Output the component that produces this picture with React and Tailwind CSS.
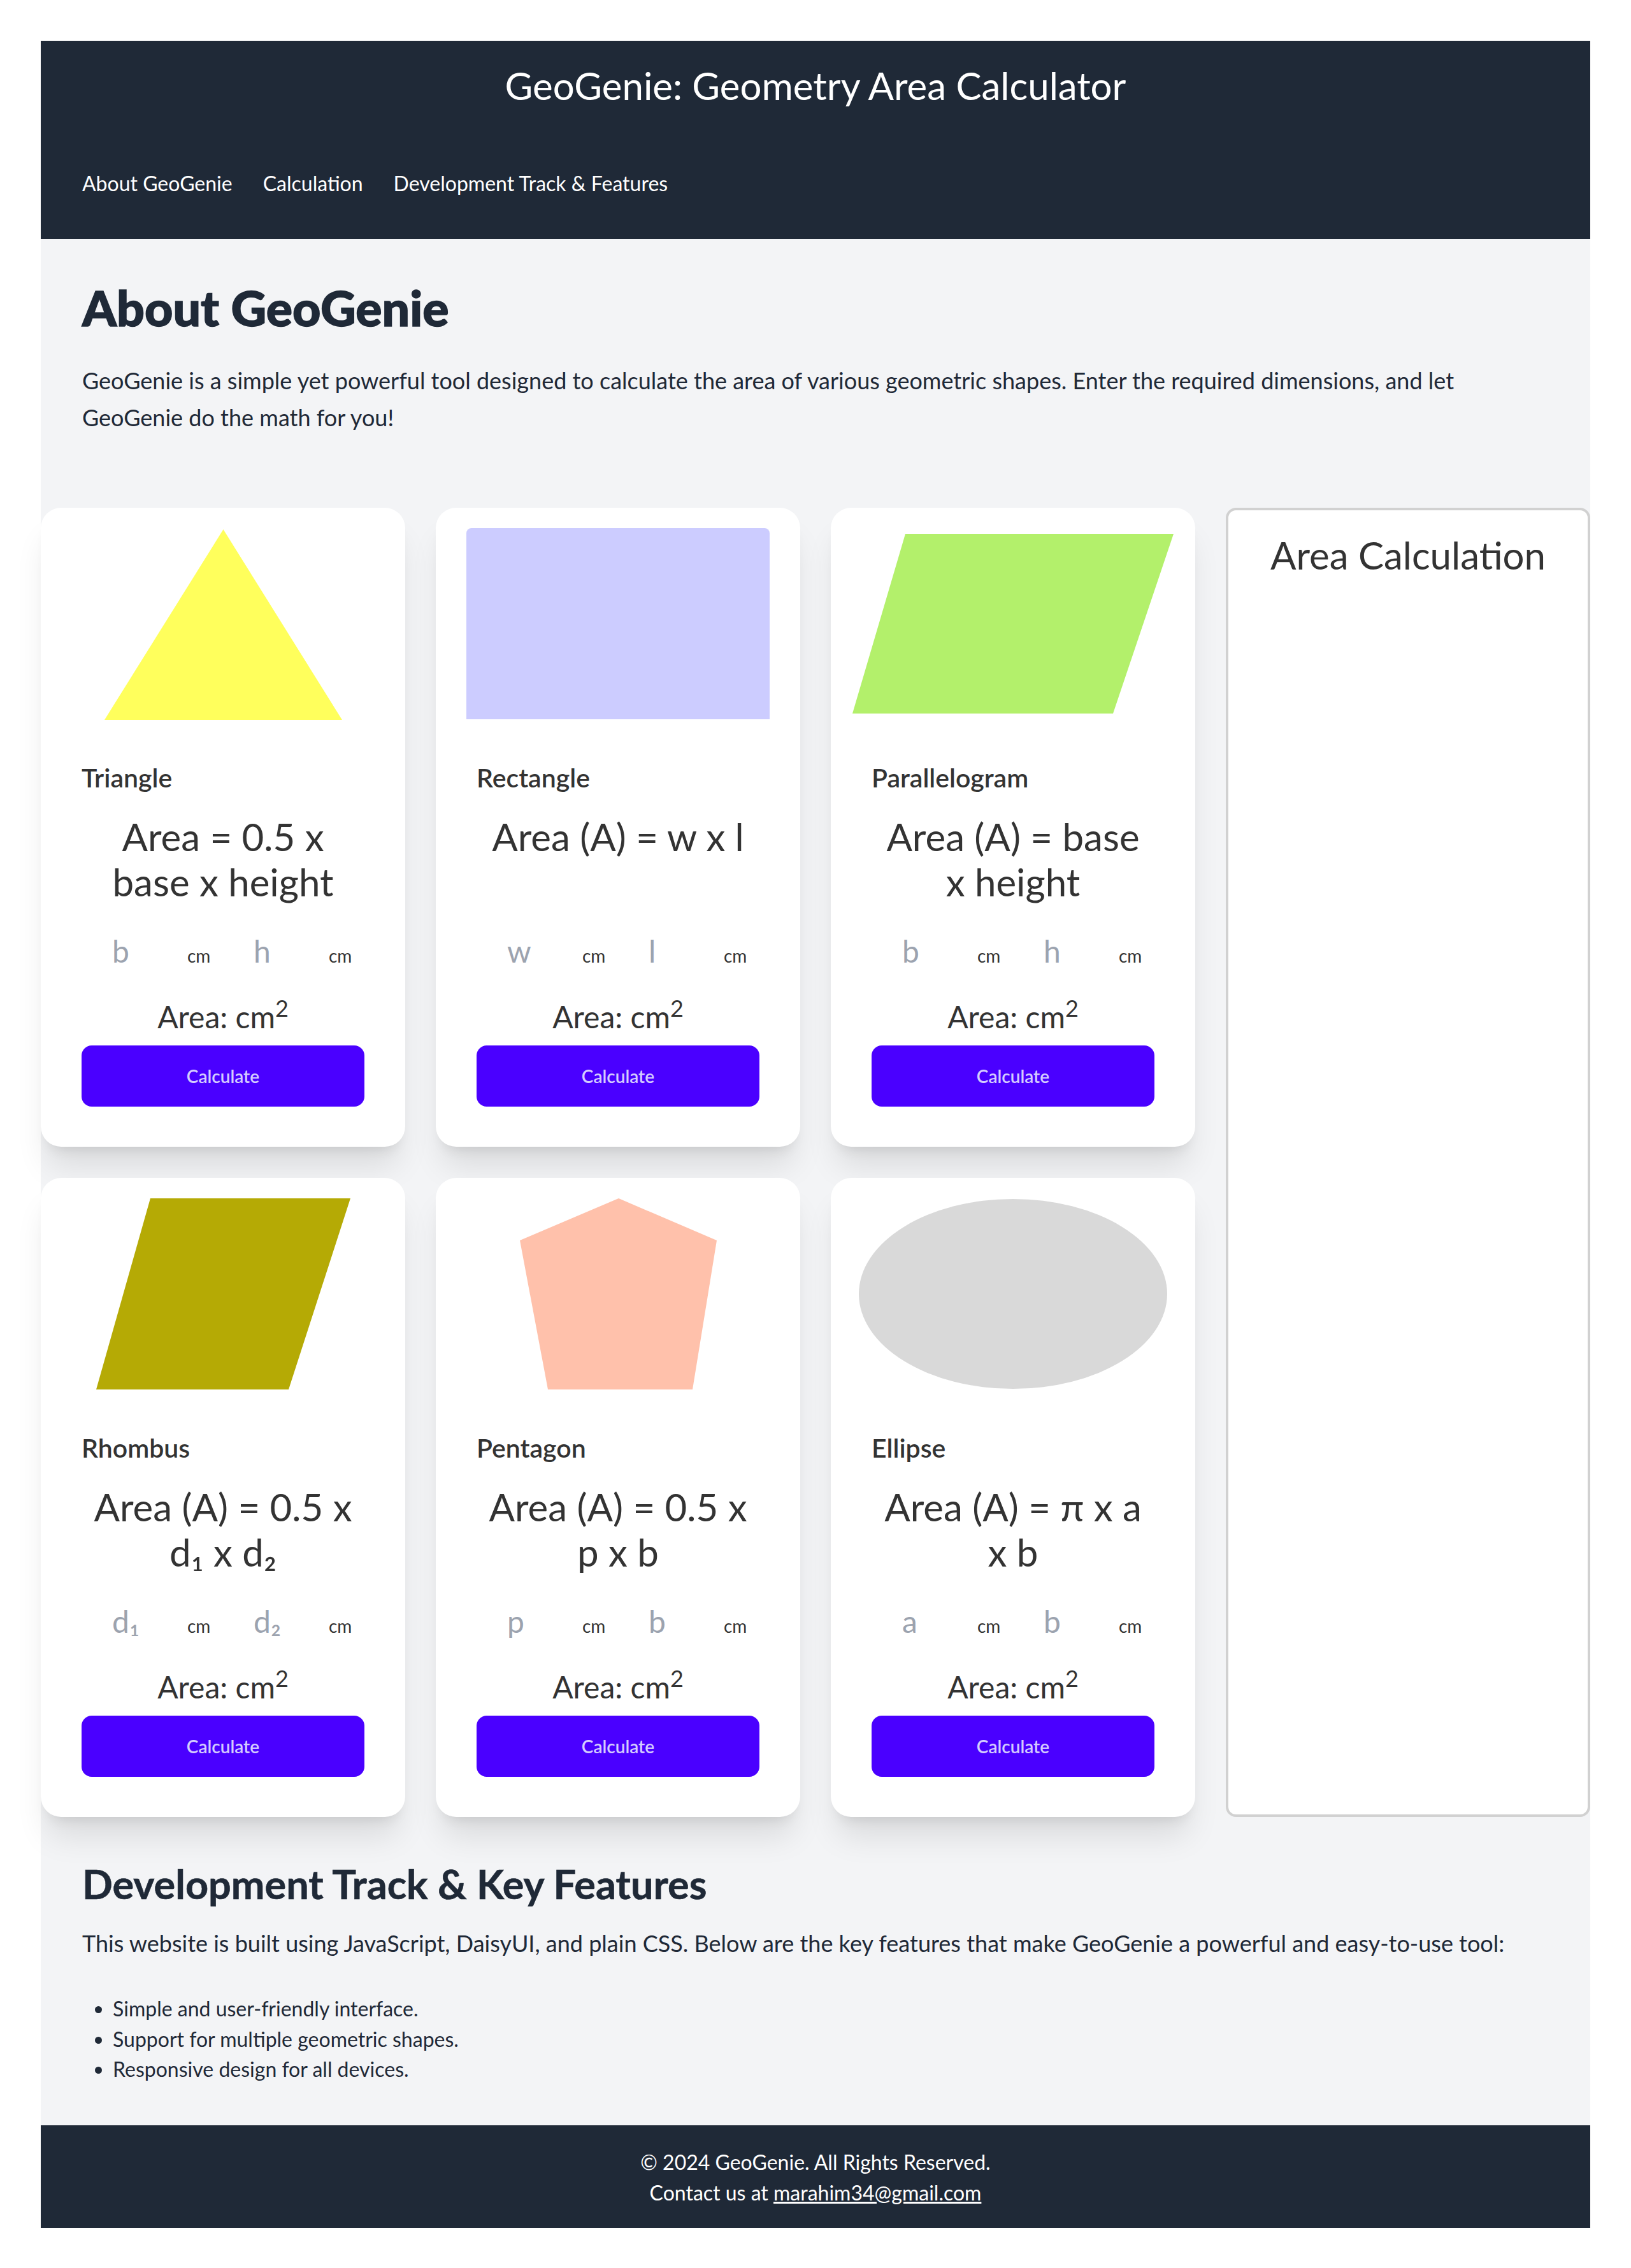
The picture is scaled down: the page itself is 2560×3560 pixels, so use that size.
import React from "react";

function Shape({ kind }) {
  if (kind === "triangle") {
    return (
      <svg width="373" height="299" viewBox="0 0 373 299" className="mt-[2px] shrink-0">
        <polygon points="186.5,0 373,299 0,299" fill="#ffff5c" />
      </svg>
    );
  }
  if (kind === "rectangle") {
    return <div className="w-[476px] h-[300px] shrink-0 bg-[#ccccff] rounded-t-[8px]" />;
  }
  if (kind === "parallelogram") {
    return (
      <svg width="504" height="282" viewBox="0 0 504 282" className="mt-[9px] shrink-0">
        <polygon points="83,0 504,0 409,282 0,282" fill="#b3f06b" />
      </svg>
    );
  }
  if (kind === "rhombus") {
    return (
      <svg width="399" height="300" viewBox="0 0 399 300" className="ml-[1px] shrink-0">
        <polygon points="85,0 399,0 302,300 0,300" fill="#b5aa05" />
      </svg>
    );
  }
  if (kind === "pentagon") {
    return (
      <svg width="309" height="300" viewBox="0 0 309 300" className="shrink-0">
        <polygon points="155,0 309,66 271,300 44,300 0,66" fill="#ffc1ab" />
      </svg>
    );
  }
  return <div className="w-[484px] h-[298px] shrink-0 rounded-[50%] bg-[#d9d9d9] mt-[1px]" />;
}

function Field({ placeholder }) {
  return (
    <div className="flex items-baseline">
      <input
        type="text"
        placeholder={placeholder}
        className="w-[160px] h-[96px] pl-[48px] text-[48px] bg-transparent outline-none text-[#333] placeholder:text-[#9ca3af]"
      />
      <span className="ml-[6px] text-[28px] text-[#333]">cm</span>
    </div>
  );
}

function Card({ name, kind, formula, fields }) {
  return (
    <div className="bg-white rounded-[32px] shadow-[0_40px_50px_-10px_rgba(0,0,0,0.1),0_16px_20px_-12px_rgba(0,0,0,0.1)] flex flex-col">
      <div className="h-[332px] pt-[32px] px-[40px] flex justify-center items-start">
        <Shape kind={kind} />
      </div>
      <div className="px-[64px] pt-[64px] pb-[63px] flex flex-col text-[#333]">
        <h2 className="text-[41px] leading-[56px] font-semibold">{name}</h2>
        <p className="mt-[29px] h-[142px] text-[60px] leading-[71px] text-center">{formula}</p>
        <div className="mt-[24px] grid grid-cols-2 h-[96px]">
          <Field placeholder={fields[0]} />
          <Field placeholder={fields[1]} />
        </div>
        <p className="mt-[24px] text-[48px] leading-[64px] text-center">
          Area: cm<sup>2</sup>
        </p>
        <button className="mt-[13px] h-[96px] w-full rounded-[16px] bg-[#4a00ff] text-[#d4ccff] text-[28px] font-semibold">
          Calculate
        </button>
      </div>
    </div>
  );
}

export default function App() {
  return (
    <div className="bg-white p-[64px] font-['Lato','Noto_Sans',sans-serif]">
      <header className="bg-[#1f2937] h-[311px] pt-[34px]">
        <h1 className="text-center text-white text-[60px] leading-[72px]">
          GeoGenie: Geometry Area Calculator
        </h1>
        <nav className="mt-[94px] px-[65px] flex gap-[48px] text-white text-[32px] leading-[48px]">
          <a href="#about">About GeoGenie</a>
          <a href="#calc">Calculation</a>
          <a href="#dev">Development Track &amp; Features</a>
        </nav>
      </header>

      <main className="bg-[#f3f4f6]">
        <section id="about" className="px-[65px] pt-[67px] pb-[113px]">
          <h2 className="text-[77px] leading-[80px] font-black text-[#1f2937] [-webkit-text-stroke:1.5px_#1f2937]">
            About GeoGenie
          </h2>
          <p className="mt-[46px] text-[36px] leading-[58px] text-[#1f2937]">
            GeoGenie is a simple yet powerful tool designed to calculate the area of various geometric shapes. Enter the required dimensions, and let
            <br />
            GeoGenie do the math for you!
          </p>
        </section>

        <section id="calc" className="grid grid-cols-4 gap-x-[48px] gap-y-[49px]">
          <Card
            name="Triangle"
            kind="triangle"
            formula={<>Area = 0.5 x<br />base x height</>}
            fields={["b", "h"]}
          />
          <Card
            name="Rectangle"
            kind="rectangle"
            formula={<>Area (A) = w x l</>}
            fields={["w", "l"]}
          />
          <Card
            name="Parallelogram"
            kind="parallelogram"
            formula={<>Area (A) = base<br />x height</>}
            fields={["b", "h"]}
          />
          <div className="row-span-2 bg-white border-[4px] border-[#d1d1d1] rounded-[16px] pt-[34px] text-center text-[60px] leading-[72px] text-[#333]">
            Area Calculation
          </div>
          <Card
            name="Rhombus"
            kind="rhombus"
            formula={<>Area (A) = 0.5 x<br />d₁ x d₂</>}
            fields={["d₁", "d₂"]}
          />
          <Card
            name="Pentagon"
            kind="pentagon"
            formula={<>Area (A) = 0.5 x<br />p x b</>}
            fields={["p", "b"]}
          />
          <Card
            name="Ellipse"
            kind="ellipse"
            formula={<>Area (A) = π x a<br />x b</>}
            fields={["a", "b"]}
          />
        </section>

        <section id="dev" className="px-[65px] pt-[69px] pb-[64px] text-[#1f2937]">
          <h2 className="text-[63px] leading-[72px] font-bold [-webkit-text-stroke:0.6px_#1f2937]">
            Development Track &amp; Key Features
          </h2>
          <p className="mt-[33px] text-[36px] leading-[48px]">
            This website is built using JavaScript, DaisyUI, and plain CSS. Below are the key features that make GeoGenie a powerful and easy-to-use tool:
          </p>
          <ul className="mt-[55px] list-disc pl-[48px] text-[32px] leading-[47.5px]">
            <li>Simple and user-friendly interface.</li>
            <li>Support for multiple geometric shapes.</li>
            <li>Responsive design for all devices.</li>
          </ul>
        </section>
      </main>

      <footer className="bg-[#1f2937] h-[161px] pt-[34px] text-center text-white text-[32px] leading-[48px]">
        <p>© 2024 GeoGenie. All Rights Reserved.</p>
        <p>
          Contact us at <a href="mailto:marahim34@gmail.com" className="underline">marahim34@gmail.com</a>
        </p>
      </footer>
    </div>
  );
}
